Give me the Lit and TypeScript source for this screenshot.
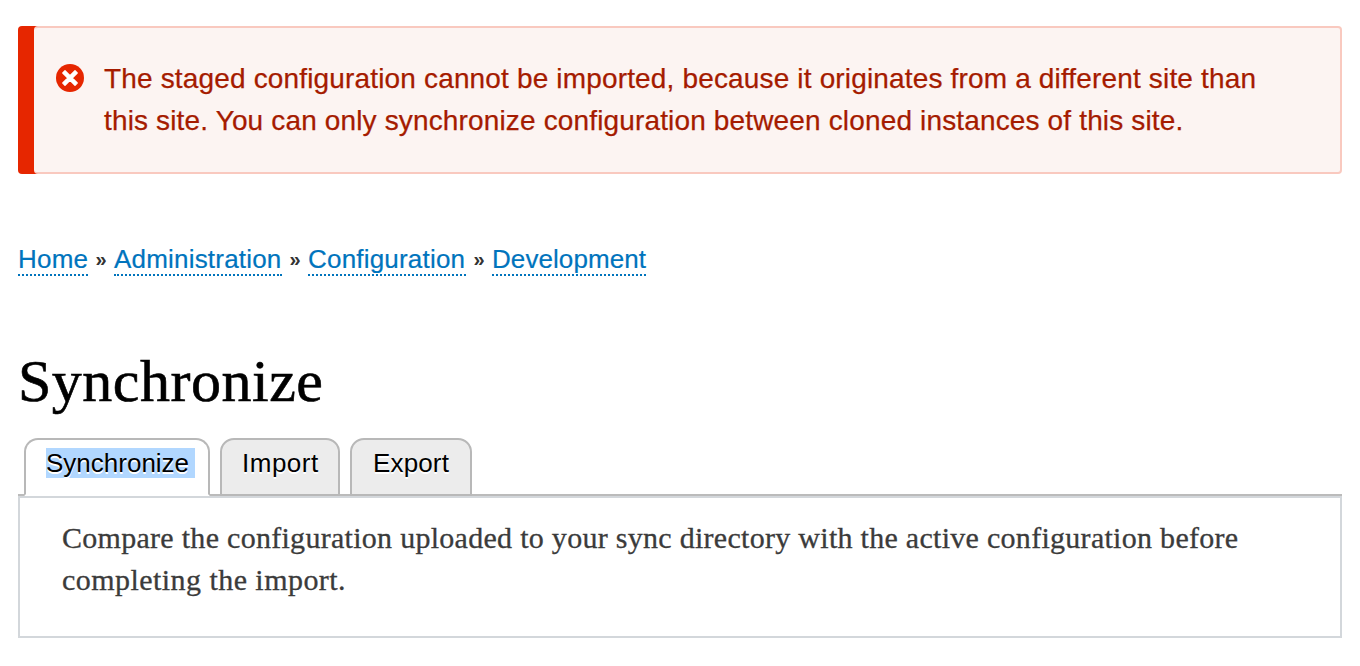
import { LitElement, html, css } from "lit";
import { customElement } from "lit/decorators.js";

@customElement("app-root")
export class AppRoot extends LitElement {
  static styles = css`
    :host {
      display: block;
      box-sizing: border-box;
      height: 666px;
      padding: 26px 18px 0;
      overflow: hidden;
      background: #fff;
      color: #333;
      font-family: "Liberation Sans", Arial, sans-serif;
    }
    * { box-sizing: border-box; }
    .line { display: block; width: max-content; white-space: nowrap; }
    .message {
      display: flex;
      gap: 20px;
      height: 148px;
      margin-left: 16px;
      padding: 30px 20px 0 22px;
      border: 2px solid #f9c9bf;
      border-left: 0;
      border-radius: 4px;
      background: #fcf4f2;
      box-shadow: -16px 0 0 #e62600;
      color: #a51b00;
      font-size: 28px;
      line-height: 42px;
      -webkit-text-stroke: 0.25px #a51b00;
    }
    .icon { flex: none; width: 28px; height: 28px; margin-top: 6px; }
    .m1 { letter-spacing: 0.16px; }
    .m2 { letter-spacing: 0.15px; }
    .crumbs {
      display: flex;
      height: 42px;
      margin-top: 64px;
      font-size: 26px;
      line-height: 42px;
    }
    .crumb {
      height: 38px;
      border-bottom: 2px dotted #0074bd;
      color: #0074bd;
      letter-spacing: 0.2px;
      white-space: nowrap;
      -webkit-text-stroke: 0.2px #0074bd;
    }
    .home { width: 70px; }
    .administration { width: 168px; }
    .configuration { width: 158px; }
    .development { width: 154px; letter-spacing: 0.08px; }
    .sep { width: 26px; text-align: center; font-size: 20px; font-weight: 700; }
    h1 {
      margin: 66px 0 0;
      height: 70px;
      color: #000;
      font: 400 60px/70px "Liberation Serif", serif;
      letter-spacing: 0.5px;
      -webkit-text-stroke: 0.6px #000;
    }
    .tabs {
      display: flex;
      gap: 10px;
      height: 58px;
      margin-top: 22px;
      padding-left: 6px;
      background: linear-gradient(#bbb, #bbb) 0 100% / 100% 2px no-repeat;
    }
    .tab {
      height: 58px;
      padding: 7px 20px 0;
      border: 2px solid #b8b8b8;
      border-radius: 14px 14px 0 0;
      background: #ececec;
      color: #000;
      font-size: 26px;
      line-height: 32px;
      text-shadow: 0 2px 0 #fff;
      white-space: nowrap;
    }
    .active { width: 186px; padding-top: 8px; border-bottom-color: #fff; background: #fff; }
    .import { width: 120px; letter-spacing: 0.5px; }
    .export { width: 122px; padding-left: 21px; letter-spacing: 0.15px; }
    .picked { display: block; width: 149px; height: 30px; line-height: 30px; background: #b1d7ff; }
    .panel {
      height: 142px;
      padding: 19px 42px 0;
      border: 2px solid #d3d7db;
      color: #3b3b3b;
      font: 30px/42px "Liberation Serif", serif;
      -webkit-text-stroke: 0.3px #3b3b3b;
    }
    .p1 { letter-spacing: 0.285px; }
    .p2 { letter-spacing: 0.45px; }
  `;

  render() {
    return html`
      <div class="message" role="alert">
        <svg class="icon" viewBox="0 0 28 28">
          <circle cx="14" cy="14" r="14" fill="#e62600" />
          <path d="M9 6.8 14 11.8 19 6.8 21.2 9 16.2 14 21.2 19 19 21.2 14 16.2 9 21.2 6.8 19 11.8 14 6.8 9Z" fill="#fff" stroke="#fff" stroke-width="1.4" stroke-linejoin="round" />
        </svg>
        <div>
          <span class="line m1">The staged configuration cannot be imported, because it originates from a different site than</span>
          <span class="line m2">this site. You can only synchronize configuration between cloned instances of this site.</span>
        </div>
      </div>
      <nav class="crumbs">
        <a class="crumb home">Home</a><span class="sep">»</span><a class="crumb administration">Administration</a><span class="sep">»</span><a class="crumb configuration">Configuration</a><span class="sep">»</span><a class="crumb development">Development</a>
      </nav>
      <h1><span class="line">Synchronize</span></h1>
      <nav class="tabs">
        <a class="tab active"><span class="picked">Synchronize</span></a>
        <a class="tab import">Import</a>
        <a class="tab export">Export</a>
      </nav>
      <section class="panel">
        <span class="line p1">Compare the configuration uploaded to your sync directory with the active configuration before</span>
        <span class="line p2">completing the import.</span>
      </section>
    `;
  }
}
